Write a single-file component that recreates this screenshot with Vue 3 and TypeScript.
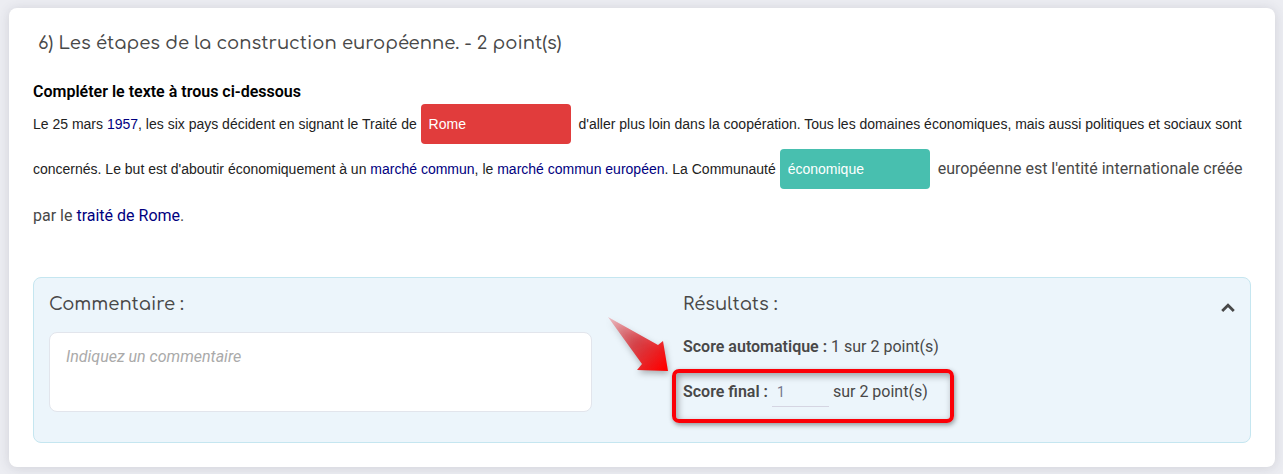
<script setup lang="ts">
import { ref } from 'vue'

const firstAnswer = ref('Rome')
const secondAnswer = ref('économique')
const comment = ref('')
const finalScore = ref('1')
const open = ref(true)
</script>

<template>
  <main class="card">
    <h2 class="title">6) Les étapes de la construction européenne. - 2 point(s)</h2>

    <section class="question">
      <strong class="instruction">Compléter le texte à trous ci-dessous</strong>
      <p class="passage">
        <span class="small">Le 25 mars <a href="#">1957</a>, les six pays décident en signant le Traité de <input v-model="firstAnswer" class="blank wrong" type="text" aria-label="Réponse 1" readonly /> d'aller plus loin dans la coopération. Tous les domaines économiques, mais aussi politiques et sociaux sont</span>
        <br />
        <span class="small">concernés. Le but est d'aboutir économiquement à un <a href="#">marché commun</a>, le <a href="#">marché commun européen</a>. La Communauté <input v-model="secondAnswer" class="blank right" type="text" aria-label="Réponse 2" readonly /></span> <span>européenne est l'entité internationale créée</span>
        <br />
        <span class="last">par le <a href="#">traité de Rome</a>.</span>
      </p>
    </section>

    <section class="panel">
      <div class="comment">
        <label class="heading" for="comment">Commentaire :</label>
        <textarea id="comment" v-model="comment" placeholder="Indiquez un commentaire"></textarea>
      </div>
      <div class="results">
        <div class="results-head">
          <h3 class="heading">Résultats :</h3>
          <button class="toggle" type="button" aria-label="Replier les résultats" :aria-expanded="open" @click="open = !open">
            <svg width="14" height="10" viewBox="0 0 14 10" aria-hidden="true">
              <path d="M1.2 8 7 2.3 12.8 8" fill="none" stroke="#484848" stroke-width="2.8" />
            </svg>
          </button>
        </div>
        <template v-if="open">
          <p class="score"><strong>Score automatique :</strong> 1 sur 2 point(s)</p>
          <div class="score final">
            <label for="final"><strong>Score final :</strong></label>
            <input id="final" v-model="finalScore" type="text" />
            <span>sur 2 point(s)</span>
            <span class="marker"></span>
            <svg class="arrow" width="72" height="68" viewBox="0 0 72 68" aria-hidden="true">
              <defs>
                <linearGradient id="fade" gradientUnits="userSpaceOnUse" x1="4" y1="4" x2="60" y2="56">
                  <stop offset="0" stop-color="#e82830" stop-opacity="0.25" />
                  <stop offset="0.5" stop-color="#dc242a" stop-opacity="0.8" />
                  <stop offset="1" stop-color="#ff0000" />
                </linearGradient>
              </defs>
              <path d="M4 4 54 32 59 28 64 58 33 57 38 51Z" fill="url(#fade)" />
            </svg>
          </div>
        </template>
      </div>
    </section>
  </main>
</template>

<style>
body {
  margin: 0;
  background: #ecedf2;
}
</style>

<style scoped>
* {
  box-sizing: border-box;
}

.card {
  margin: 8px 8px 7px 9px;
  padding: 21px 24px 24px;
  border-radius: 8px;
  background: #fff;
  box-shadow: 0 1px 12px rgba(60, 60, 80, 0.16);
  font: 16px/24px Roboto, sans-serif;
  color: #484848;
}

.title,
.heading {
  margin: 0;
  font-family: Comfortaa, Lato, sans-serif;
  font-size: 18px;
  font-weight: 500;
  line-height: 28px;
}

.title {
  padding-left: 5px;
}

.question {
  padding-top: 23px;
}

.instruction {
  display: block;
  font-weight: 600;
  color: #000;
}

.passage {
  margin: 0;
  line-height: 40px;
}

.passage a {
  color: #00007f;
  text-decoration: none;
}

.last {
  line-height: 44px;
}

.small {
  font-family: "Liberation Sans", Arial, sans-serif;
  font-size: 14px;
  color: #222;
}

.blank {
  width: 150px;
  height: 40px;
  margin: 0 4px 5px 0;
  padding: 0 8px;
  border: 0;
  border-radius: 4px;
  font: 14px "Liberation Sans", Arial, sans-serif;
  color: #fff;
}

.wrong {
  background: #e13c3c;
}

.right {
  background: #48bfaf;
}

.panel {
  display: grid;
  grid-template-columns: 1fr 1fr;
  margin-top: 39px;
  padding: 12px 15px 30px;
  border: 1px solid #c5e6f0;
  border-radius: 8px;
  background: #ecf5fb;
}

.comment {
  padding-right: 50px;
}

.comment .heading {
  display: block;
}

textarea {
  display: block;
  width: 100%;
  height: 80px;
  margin-top: 14px;
  padding: 12px 16px;
  border: 1px solid #e2e5ec;
  border-radius: 8px;
  background: #fff;
  font: 16px/24px Roboto, sans-serif;
  color: #484848;
  resize: none;
}

textarea::placeholder {
  font-style: italic;
  color: #aaa;
}

.results {
  padding-left: 41px;
}

.results-head {
  display: flex;
  justify-content: space-between;
  align-items: center;
}

.toggle {
  display: flex;
  padding: 8px 0 0;
  border: 0;
  background: none;
}

.score {
  margin: 17px 0 0;
}

.score strong {
  font-weight: 600;
}

.final {
  position: relative;
  display: flex;
  align-items: center;
  width: max-content;
  margin-top: 18px;
}

.final input {
  width: 57px;
  height: 30px;
  margin: 0 4px;
  padding: 0 5px;
  border: 0;
  border-bottom: 1px solid #d5d5e2;
  background: transparent;
  font: 14px Roboto, sans-serif;
  color: #74788d;
}

.marker {
  position: absolute;
  inset: -8px -26px -16px -11px;
  border: 4px solid #fb0007;
  border-radius: 7px;
  box-shadow: 1px 2px 5px rgba(0, 0, 0, 0.4), inset 2px 3px 7px rgba(0, 0, 0, 0.35);
  pointer-events: none;
}

.arrow {
  position: absolute;
  top: -64px;
  left: -79px;
  filter: drop-shadow(1px 3px 3px rgba(0, 0, 0, 0.3));
  pointer-events: none;
}
</style>
